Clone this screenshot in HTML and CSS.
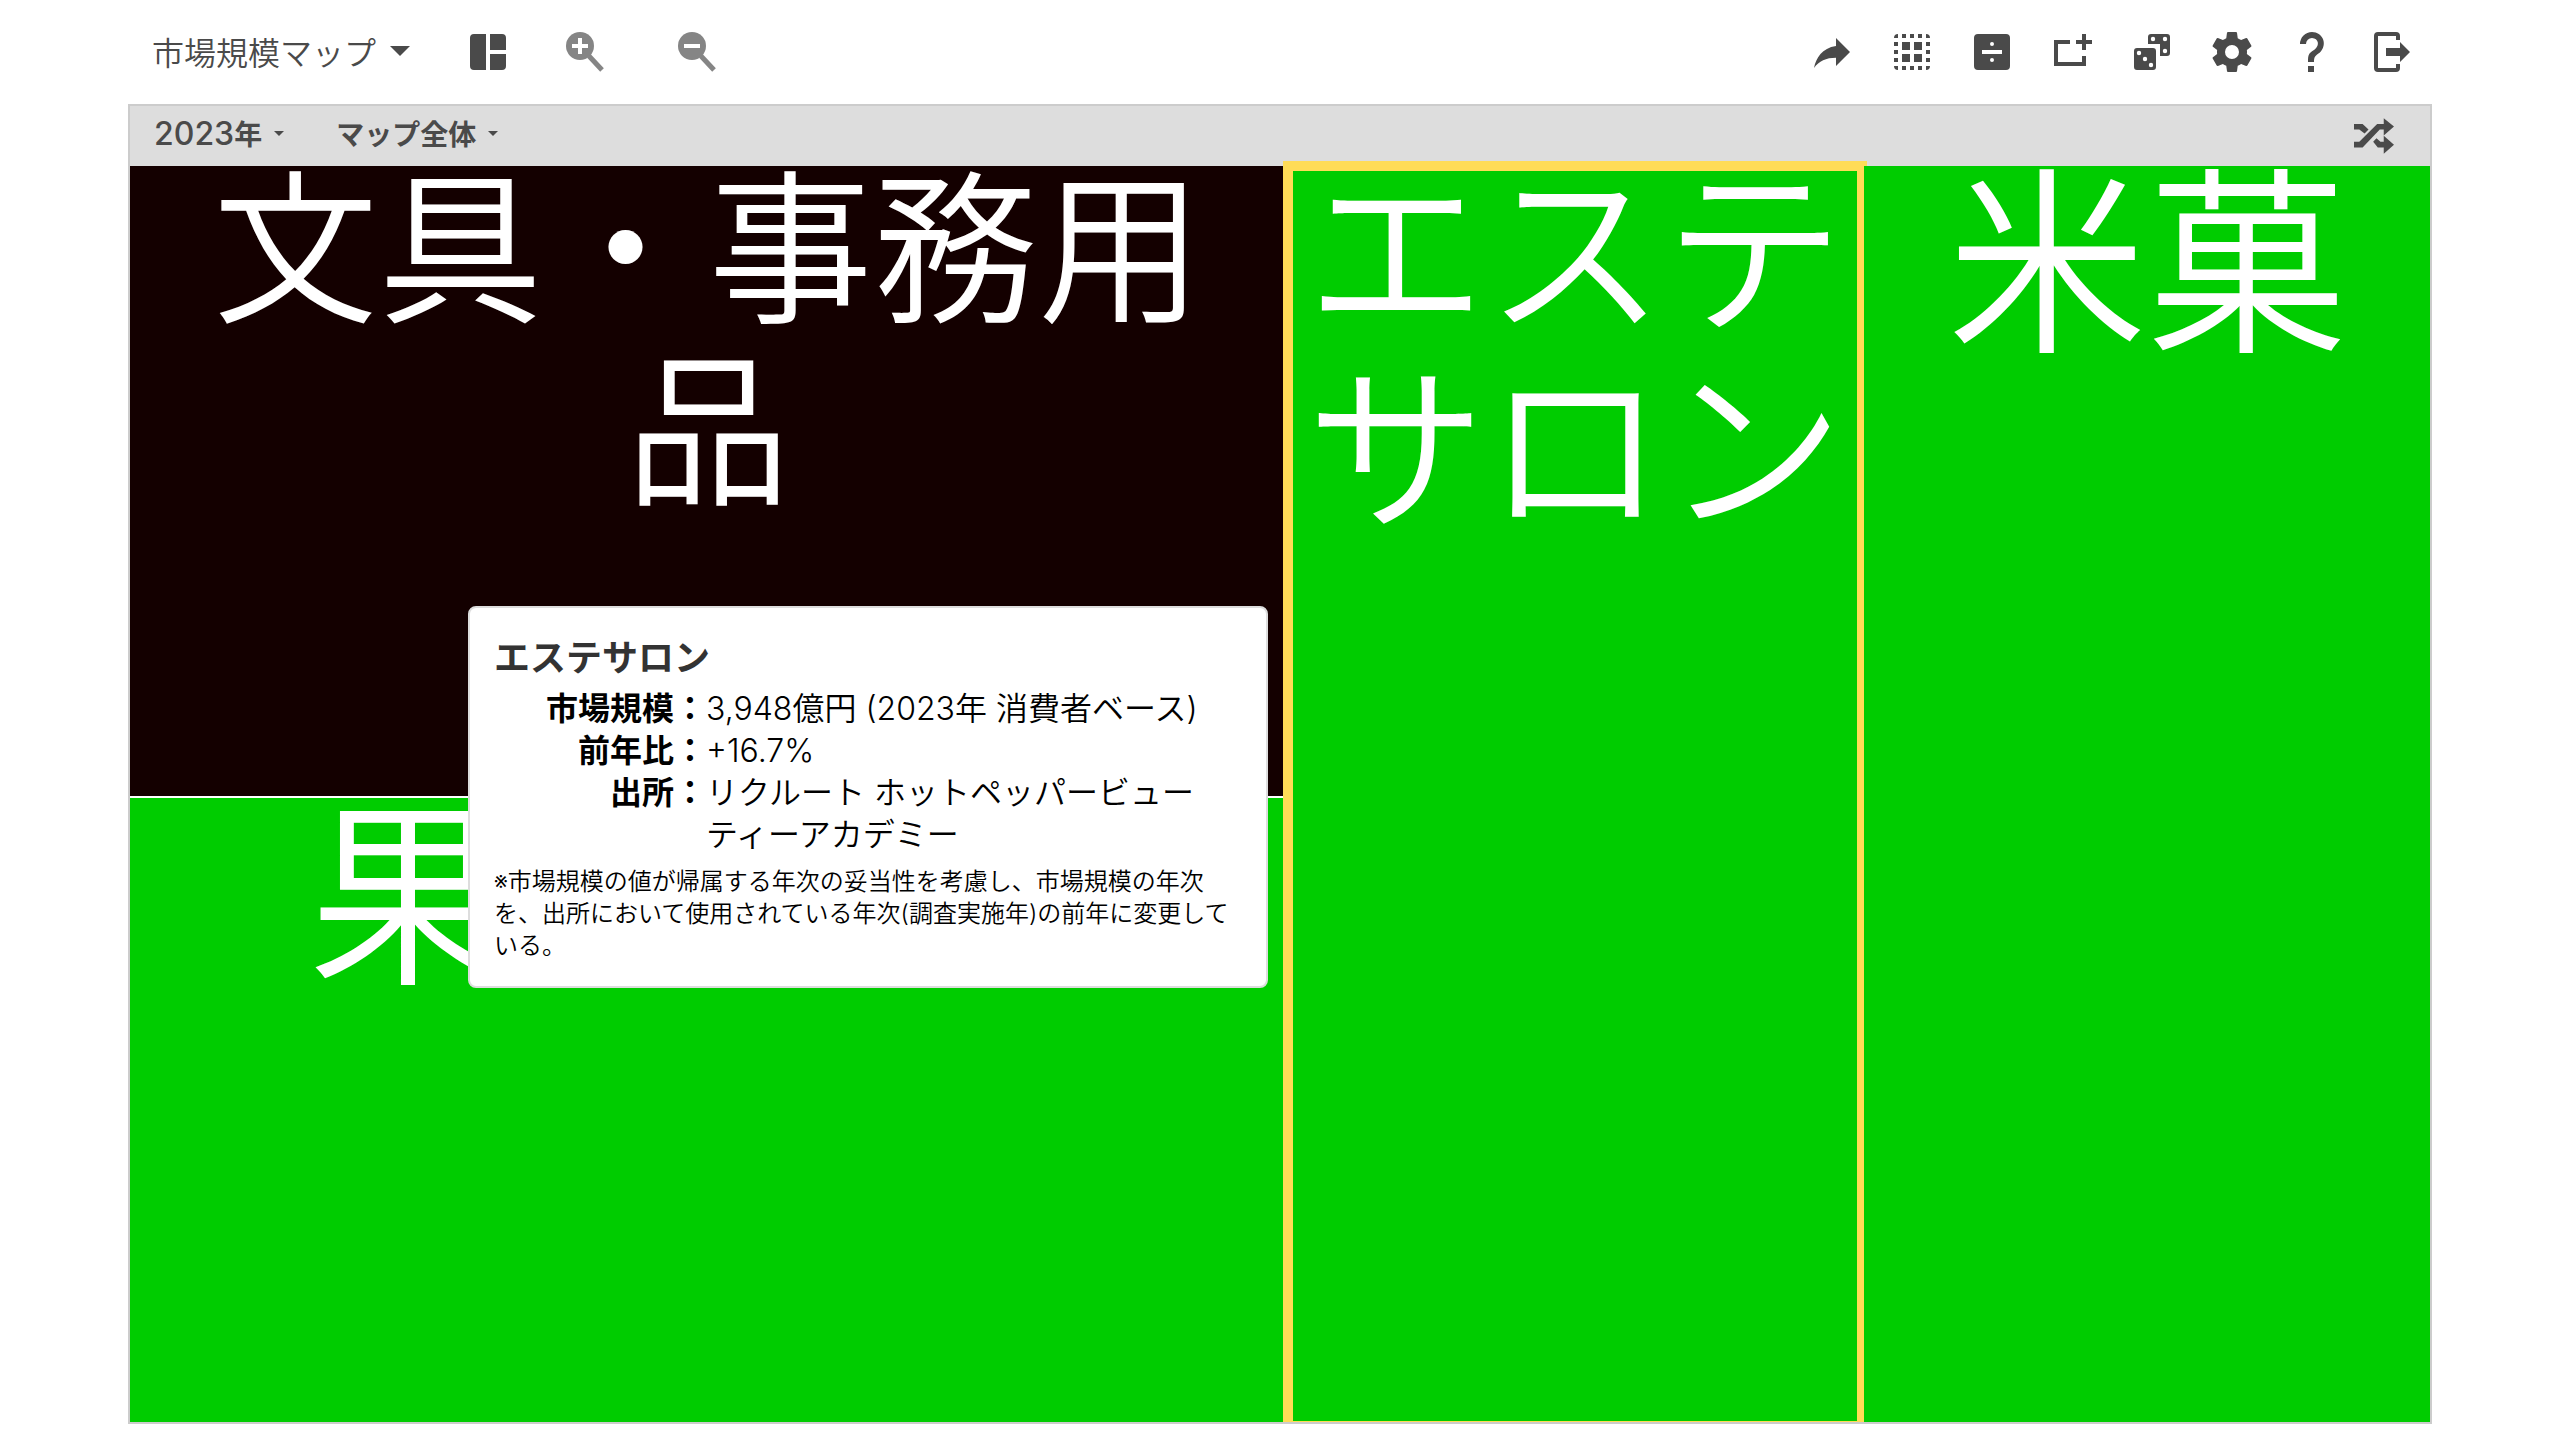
FILE: index.html
```html
<!DOCTYPE html>
<html lang="ja">
<head>
<meta charset="utf-8">
<meta name="viewport" content="width=device-width, initial-scale=1">
<title>市場規模マップ</title>
<link rel="stylesheet" href="styles.css">
</head>
<body>
<div class="page">
  <header class="toolbar">
    <button class="map-menu" type="button">市場規模マップ<span class="caret caret-large"></span></button>
    <div class="view-tools">
      <button class="tool" type="button" aria-label="レイアウト">
        <svg class="icon" viewBox="0 0 24 24"><path d="M11 21H5a2 2 0 0 1-2-2V5a2 2 0 0 1 2-2h6zM13 3h6a2 2 0 0 1 2 2v6h-8zM13 13h8v6a2 2 0 0 1-2 2h-6z"/></svg>
      </button>
      <button class="tool zoom" type="button" aria-label="拡大">
        <svg class="icon" viewBox="0 0 48 48"><ellipse cx="18" cy="18" rx="14" ry="14"/><path class="handle" d="M27 28L40 42"/><path class="sign" d="M10 18h16M18 10v16"/></svg>
      </button>
      <button class="tool zoom" type="button" aria-label="縮小">
        <svg class="icon" viewBox="0 0 48 48"><ellipse cx="18" cy="18" rx="14" ry="14"/><path class="handle" d="M27 28L40 42"/><path class="sign" d="M10 18h16"/></svg>
      </button>
    </div>
    <div class="actions">
      <button class="tool" type="button" aria-label="共有">
        <svg class="icon" viewBox="0 0 24 24"><path d="M21 12L14 5V9C7 10 4 15 3 20C5.500 16.500 9 14.900 14 14.900V19Z"/></svg>
      </button>
      <button class="tool" type="button" aria-label="選択">
        <svg class="icon" viewBox="0 0 24 24"><path d="M7 7h4v4H7zM13 7h4v4h-4zM7 13h4v4H7zM13 13h4v4h-4zM7 3h2v2H7zM11 3h2v2h-2zM15 3h2v2h-2zM7 19h2v2H7zM11 19h2v2h-2zM15 19h2v2h-2zM3 7h2v2H3zM3 11h2v2H3zM3 15h2v2H3zM19 7h2v2h-2zM19 11h2v2h-2zM19 15h2v2h-2zM3 5a2 2 0 0 1 2-2v2zM19 3a2 2 0 0 1 2 2h-2zM21 19a2 2 0 0 1-2 2v-2zM5 21a2 2 0 0 1-2-2h2z"/></svg>
      </button>
      <button class="tool" type="button" aria-label="割り算">
        <svg class="icon" viewBox="0 0 24 24"><path fill-rule="evenodd" d="M5 3h14a2 2 0 0 1 2 2v14a2 2 0 0 1-2 2H5a2 2 0 0 1-2-2V5a2 2 0 0 1 2-2zM7 11v2h10v-2zM12 7a1 1 0 0 0 0 2a1 1 0 0 0 0-2zM12 15a1 1 0 0 0 0 2a1 1 0 0 0 0-2z"/></svg>
      </button>
      <button class="tool" type="button" aria-label="追加">
        <svg class="icon" viewBox="0 0 24 24"><path d="M3 6h8v2H5v9h12v-3h2v5H3zM17 3h2v3h3v2h-3v3h-2V8h-3V6h3z"/></svg>
      </button>
      <button class="tool" type="button" aria-label="ランダム">
        <svg class="icon" viewBox="0 0 24 24"><path fill-rule="evenodd" d="M4.500 10h8a1.500 1.500 0 0 1 1.500 1.500v8a1.500 1.500 0 0 1-1.500 1.500h-8A1.500 1.500 0 0 1 3 19.500v-8A1.500 1.500 0 0 1 4.500 10zM5.500 11.400a1.100 1.100 0 0 0 0 2.200a1.100 1.100 0 0 0 0-2.200zM8.500 14.400a1.100 1.100 0 0 0 0 2.200a1.100 1.100 0 0 0 0-2.200zM11.500 17.400a1.100 1.100 0 0 0 0 2.200a1.100 1.100 0 0 0 0-2.200zM11.500 3h8A1.500 1.500 0 0 1 21 4.500v8a1.500 1.500 0 0 1-1.500 1.500H16V8h-6V4.500A1.500 1.500 0 0 1 11.500 3zM12.500 4.400a1.100 1.100 0 0 0 0 2.200a1.100 1.100 0 0 0 0-2.200zM18.500 4.400a1.100 1.100 0 0 0 0 2.200a1.100 1.100 0 0 0 0-2.200zM18.500 10.400a1.100 1.100 0 0 0 0 2.200a1.100 1.100 0 0 0 0-2.200z"/></svg>
      </button>
      <button class="tool" type="button" aria-label="設定">
        <svg class="icon" viewBox="0 0 24 24"><path d="M12,15.5A3.5,3.5 0 0,1 8.5,12A3.5,3.5 0 0,1 12,8.5A3.5,3.5 0 0,1 15.5,12A3.5,3.5 0 0,1 12,15.5M19.43,12.97C19.47,12.65 19.5,12.33 19.5,12C19.5,11.67 19.47,11.34 19.43,11L21.54,9.37C21.73,9.22 21.78,8.95 21.66,8.73L19.66,5.27C19.54,5.05 19.27,4.96 19.05,5.05L16.56,6.05C16.04,5.66 15.5,5.32 14.87,5.07L14.5,2.42C14.46,2.18 14.25,2 14,2H10C9.75,2 9.54,2.18 9.5,2.42L9.13,5.07C8.5,5.32 7.96,5.66 7.44,6.05L4.95,5.05C4.73,4.96 4.46,5.05 4.34,5.27L2.34,8.73C2.21,8.95 2.27,9.22 2.46,9.37L4.57,11C4.53,11.34 4.5,11.67 4.5,12C4.5,12.33 4.53,12.65 4.57,12.97L2.46,14.63C2.27,14.78 2.21,15.05 2.34,15.27L4.34,18.73C4.46,18.95 4.73,19.03 4.95,18.95L7.44,17.94C7.96,18.34 8.5,18.68 9.13,18.93L9.5,21.58C9.54,21.82 9.75,22 10,22H14C14.25,22 14.46,21.82 14.5,21.58L14.87,18.93C15.5,18.67 16.04,18.34 16.56,17.94L19.05,18.95C19.27,19.03 19.54,18.95 19.66,18.73L21.66,15.27C21.78,15.05 21.73,14.78 21.54,14.63L19.43,12.97Z"/></svg>
      </button>
      <button class="tool" type="button" aria-label="ヘルプ">
        <svg class="icon" viewBox="0 0 24 24"><path d="M10,19H13V22H10V19M12,2C17.35,2.22 19.68,7.62 16.5,11.67C15.67,12.67 14.33,13.33 13.67,14.17C13,15 13,16 13,17H10C10,15.33 10,13.92 10.67,12.92C11.33,11.92 12.67,11.33 13.5,10.67C15.92,8.43 15.32,5.26 12,5A3,3 0 0,0 9,8H6A6,6 0 0,1 12,2Z"/></svg>
      </button>
      <button class="tool" type="button" aria-label="ログアウト">
        <svg class="icon" viewBox="0 0 24 24"><path d="M5 2h9a2 2 0 0 1 2 2v2h-2V4H5v16h9v-2h2v2a2 2 0 0 1-2 2H5a2 2 0 0 1-2-2V4a2 2 0 0 1 2-2zM9 10h7V7l5 5l-5 5v-3H9z"/></svg>
      </button>
    </div>
  </header>

  <main class="board">
    <div class="filters">
      <button class="filter" type="button"><span><span class="year">2023</span>年</span><span class="caret"></span></button>
      <button class="filter" type="button">マップ全体<span class="caret"></span></button>
      <button class="shuffle" type="button" aria-label="シャッフル">
        <svg class="shuffle-icon" viewBox="702 358 121 107"><path d="M702 375h26l18 17l-12 12l-16-12h-16zM702 429h16l54-54h20v-17l31 25l-31 27v-18h-12l-52 54h-26zM760 429l10-11l12 11h10v-18l31 27l-31 27v-19h-18z"/></svg>
      </button>
    </div>

    <div class="map">
      <div class="stack">
        <section class="tile tile-dark"><p class="label label-s">文具・事務用品</p></section>
        <section class="tile"><p class="label label-l">果実飲料</p></section>
      </div>
      <section class="tile selected"><p class="label label-m">エステサロン</p></section>
      <section class="tile last"><p class="label label-l">米菓</p></section>

      <aside class="tooltip" role="tooltip">
        <h2 class="tooltip-title">エステサロン</h2>
        <dl class="facts">
          <dt>市場規模：</dt><dd>3,948億円 (2023年 消費者ベース)</dd>
          <dt>前年比：</dt><dd>+16.7%</dd>
          <dt>出所：</dt><dd>リクルート ホットペッパービューティーアカデミー</dd>
        </dl>
        <p class="note">※市場規模の値が帰属する年次の妥当性を考慮し、市場規模の年次を、出所において使用されている年次(調査実施年)の前年に変更している。</p>
      </aside>
    </div>
  </main>
</div>
</body>
</html>
```
FILE: styles.css
```css
* {
  box-sizing: border-box;
}

body {
  margin: 0;
  background: #fff;
  color: #000;
  font-family: Inter, "Noto Sans CJK JP", sans-serif;
  font-weight: 350;
  line-break: strict;
}

button {
  border: 0;
  padding: 0;
  background: none;
  color: #4a4a4a;
  font: inherit;
  cursor: pointer;
}

.page {
  display: flex;
  flex-direction: column;
  min-height: 100vh;
  padding: 0 5% 16px;
}

.toolbar {
  display: flex;
  align-items: center;
  height: 104px;
  padding: 0 16px 0 24px;
}

.map-menu {
  display: flex;
  align-items: center;
  gap: 14px;
  padding-bottom: 2px;
  font-size: 32px;
}

.caret {
  border: 5px solid transparent;
  border-top-color: #4a4a4a;
  border-bottom: 0;
}

.caret-large {
  border-width: 10px 10px 0;
}

.view-tools {
  display: flex;
  gap: 64px;
  margin-left: 54px;
}

.view-tools .tool:first-child {
  margin-right: -14px;
}

.actions {
  display: flex;
  gap: 32px;
  margin-left: auto;
}

.tool,
.icon {
  display: block;
  width: 48px;
  height: 48px;
}

.icon,
.shuffle-icon {
  fill: #4a4a4a;
}

.zoom .icon {
  fill: #858585;
}

.handle,
.sign {
  fill: none;
  stroke: #858585;
  stroke-width: 5;
}

.sign {
  stroke: #fff;
  stroke-width: 4;
}

.board {
  display: flex;
  flex: 1;
  flex-direction: column;
  border: 2px solid #ccc;
}

.filters {
  display: flex;
  align-items: center;
  gap: 52px;
  height: 60px;
  padding: 0 36px 6px 24px;
  background: #ddd;
}

.filter {
  display: flex;
  align-items: center;
  gap: 12px;
  font-size: 28px;
  font-weight: 600;
}

.year {
  font-size: 32px;
  font-weight: 500;
  line-height: 1;
}

.shuffle {
  margin-left: auto;
  padding-top: 6px;
}

.shuffle-icon {
  display: block;
  width: 40px;
  height: 36px;
}

.map {
  position: relative;
  display: grid;
  flex: 1;
  grid-template-columns: 1156fr 574fr 566fr;
  gap: 2px;
  clip-path: inset(-5px 0 0 0);
}

.stack {
  display: grid;
  grid-template-rows: 630fr 624fr;
  gap: 2px;
}

.tile {
  padding: 0 8px;
  background: #00cc00;
  color: #fff;
}

.tile-dark {
  padding: 0 48px;
  background: #140000;
}

.label {
  margin: 0;
  line-height: 1.1;
  text-align: center;
}

.label-s {
  margin-top: -6px;
  font-size: 165px;
}

.label-m {
  margin-top: -10px;
  font-size: 179px;
}

.label-l {
  margin-top: -12px;
  font-size: 200px;
}

.selected {
  z-index: 1;
  margin-bottom: -4px;
  outline: 10px solid #ffdc57;
  outline-offset: -5px;
}

.last {
  z-index: 2;
}

.tooltip {
  position: absolute;
  z-index: 3;
  top: 440px;
  left: 338px;
  width: 800px;
  padding: 22px 24px 24px;
  border: 2px solid #ddd;
  border-radius: 8px;
  background: #fff;
}

.tooltip-title {
  margin: 0;
  color: #333;
  font-size: 36px;
  font-weight: 600;
  line-height: 56px;
}

.facts {
  display: grid;
  grid-template-columns: 212px 1fr;
  margin: 2px 0 0;
  font-size: 32px;
  line-height: 42px;
}

.facts dt {
  font-weight: 700;
  text-align: right;
}

.facts dd {
  margin: 0;
}

.note {
  margin: 10px 0 0;
  font-size: 24px;
  line-height: 32px;
}
```
